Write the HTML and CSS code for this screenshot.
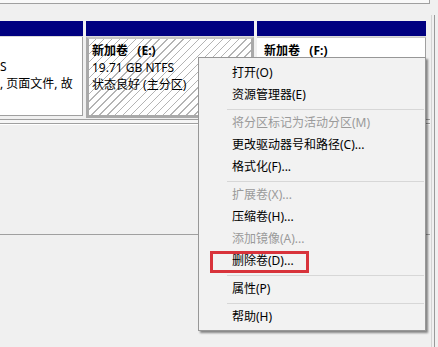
FILE: index.html
```html
<!DOCTYPE html>
<html>
<head>
    <title>磁盘管理</title>
    <link rel="stylesheet" href="styles.css">
</head>
<body>
    <div class="window">
        <div class="main">
            <div class="top-strip"></div>
            <div class="disks">
                <div class="part part-sys">
                    <div class="part-head"></div>
                    <div class="part-body">
                        <div class="line">&nbsp;</div>
                        <div class="line">S</div>
                        <div class="line">, 页面文件, 故</div>
                    </div>
                </div>
                <div class="part part-e">
                    <div class="part-head"></div>
                    <div class="part-body">
                        <div class="line title">新加卷&nbsp;&nbsp; (E:)</div>
                        <div class="line">19.71 GB NTFS</div>
                        <div class="line">状态良好 (主分区)</div>
                    </div>
                </div>
                <div class="part part-f">
                    <div class="part-head"></div>
                    <div class="part-body">
                        <div class="line title">新加卷&nbsp;&nbsp; (F:)</div>
                    </div>
                </div>
            </div>
            <div class="double-rule"></div>
            <div class="lower"></div>
        </div>
        <div class="edge"></div>
    </div>

    <div class="menu">
        <div class="item">打开(O)</div>
        <div class="item">资源管理器(E)</div>
        <div class="sep"></div>
        <div class="item disabled">将分区标记为活动分区(M)</div>
        <div class="item">更改驱动器号和路径(C)...</div>
        <div class="item">格式化(F)...</div>
        <div class="sep"></div>
        <div class="item disabled">扩展卷(X)...</div>
        <div class="item">压缩卷(H)...</div>
        <div class="item disabled">添加镜像(A)...</div>
        <div class="item marked">删除卷(D)...</div>
        <div class="sep"></div>
        <div class="item">属性(P)</div>
        <div class="sep"></div>
        <div class="item">帮助(H)</div>
    </div>
</body>
</html>
```

FILE: styles.css
```css
body {
    margin: 0;
    width: 438px;
    height: 347px;
    overflow: hidden;
    background-color: #f0f0f0;
    font-family: "Noto Sans", "Noto Sans CJK SC", sans-serif;
    font-size: 12px;
    color: #000;
    position: relative;
}

.window {
    display: flex;
    height: 347px;
}

.main {
    width: 430px;
}

.top-strip {
    height: 3px;
    background-color: #f9f9f9;
    border-bottom: 1px solid #a0a0a0;
    border-right: 1px solid #a0a0a0;
}

.disks {
    display: flex;
    gap: 3px;
    margin-top: 17px;
    width: 426px;
}

.part-head {
    height: 15px;
    background-color: #000080;
    border-bottom: 1px solid #d8d8d8;
}

.part-body {
    box-sizing: border-box;
    overflow: hidden;
    white-space: nowrap;
}

.line {
    height: 17px;
    line-height: 17px;
}

.title {
    font-weight: bold;
}

.part-sys {
    width: 83px;
}

.part-sys .part-body {
    height: 79px;
    background-color: #fff;
    border-right: 1px solid #a0a0a0;
    border-bottom: 1px solid #a0a0a0;
    padding-top: 4px;
}

.part-e {
    width: 168px;
}

.part-e .part-body {
    height: 81px;
    border: 3px solid #a9a9a9;
    border-top: 2px solid #c4c4c4;
    padding: 3px 0 0 3px;
    background-color: #fff;
    background-image: repeating-linear-gradient(135deg, #fff 0, #fff 4.6px, #b4b4b4 4.6px, #b4b4b4 5.6px);
}

.part-f {
    width: 169px;
}

.part-f .part-body {
    height: 81px;
    background-color: #fff;
    border-top: 1px solid #c8c8c8;
    border-right: 1px solid #a0a0a0;
    padding: 4px 0 0 7px;
}

.double-rule {
    margin-top: 1px;
    height: 3px;
    border-top: 1px solid #a0a0a0;
    border-bottom: 1px solid #a0a0a0;
    background-color: #f6f6f6;
    box-shadow: 0 1px 0 #fff;
}

.lower {
    height: 110px;
    border-bottom: 1px solid #a0a0a0;
}

.edge {
    margin-top: 15px;
    margin-left: 1px;
    width: 2px;
    border-left: 1px solid #d4d4d4;
    border-right: 1px solid #9a9a9a;
}

/* context menu */
.menu {
    position: absolute;
    left: 198px;
    top: 57px;
    width: 226px;
    padding: 4px 0 2px 0;
    background-color: #f2f2f2;
    border: 1px solid #979797;
    box-shadow: 2px 2px 2px rgba(0, 0, 0, 0.45);
}

.item {
    position: relative;
    height: 22px;
    line-height: 22px;
    padding-left: 33px;
    white-space: nowrap;
}

.item.disabled {
    color: #9a9a9a;
}

.item.marked::after {
    content: "";
    position: absolute;
    left: 11px;
    top: 1px;
    width: 99px;
    height: 22px;
    box-sizing: border-box;
    border: 3px solid #d8333b;
}

.sep {
    height: 1px;
    margin: 3px 1px 2px 28px;
    background-color: #d7d7d7;
}
```
